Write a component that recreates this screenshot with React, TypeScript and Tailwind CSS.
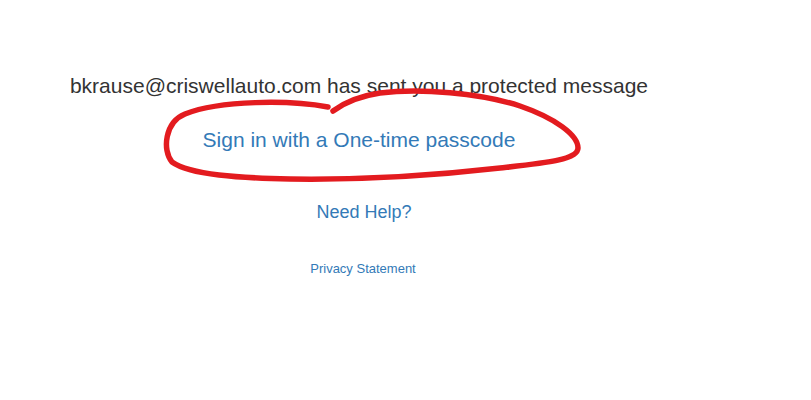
import React from "react";

export default function App() {
  return (
    <div className="relative w-[811px] h-[400px] bg-white overflow-hidden" style={{ fontFamily: '"Liberation Sans", Arial, sans-serif' }}>
      <div className="w-[718px] flex flex-col items-center pt-[74px]">
        <div className="text-[21px] leading-[24px] text-[#333333]">
          bkrause@criswellauto.com has sent you a protected message
        </div>
        <a className="mt-[30px] text-[21px] leading-[24px] text-[#337ab7]" href="#">
          Sign in with a One-time passcode
        </a>
        <a className="mt-[50px] ml-[10px] text-[18px] leading-[21px] text-[#337ab7]" href="#">
          Need Help?
        </a>
        <a className="mt-[38px] ml-[8px] text-[13px] leading-[15px] text-[#337ab7]" href="#">
          Privacy Statement
        </a>
      </div>
      <svg className="absolute left-0 top-0 pointer-events-none" width="811" height="400" viewBox="0 0 811 400">
        <path
          d="M 328 107 C 290 100, 220 100, 185 114 C 165 122, 162 150, 172 162 C 190 175, 240 178, 290 179 C 360 180, 430 176, 500 168 C 545 163, 578 160, 578 148 C 578 135, 555 118, 520 106 C 480 93, 420 88, 380 93 C 360 96, 345 102, 333 111"
          fill="none"
          stroke="#e31b1f"
          strokeWidth="5.5"
          strokeLinecap="round"
          strokeLinejoin="round"
        />
      </svg>
    </div>
  );
}
